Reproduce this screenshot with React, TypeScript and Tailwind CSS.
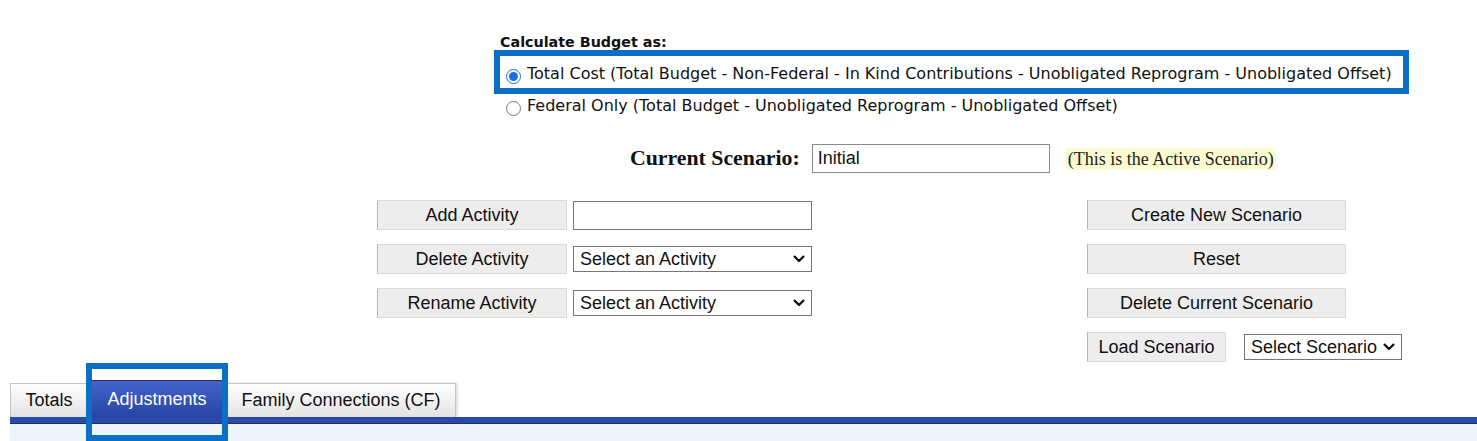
import React from "react";

const Chevron = () => (
  <svg width="12" height="8" viewBox="0 0 12 8" className="shrink-0">
    <path d="M1.6 1.6 L6 6 L10.4 1.6" fill="none" stroke="#111" strokeWidth="2.2" strokeLinecap="round" strokeLinejoin="round" />
  </svg>
);

const Btn = ({ children, className = "" }: { children: React.ReactNode; className?: string }) => (
  <div
    className={
      "flex items-center justify-center h-[30px] bg-[#ededed] border border-[#d9d9d9] border-l-[#b4b4b4] text-[18px] text-[#111] font-['Liberation_Sans',Arial,sans-serif] " +
      className
    }
  >
    {children}
  </div>
);

const Select = ({ label, className = "" }: { label: string; className?: string }) => (
  <div
    className={
      "flex items-center justify-between h-[26px] bg-white border border-[#767676] pl-[6px] pr-[6px] text-[18px] text-[#111] font-['Liberation_Sans',Arial,sans-serif] " +
      className
    }
  >
    <span className="leading-none">{label}</span>
    <Chevron />
  </div>
);

export default function App() {
  return (
    <div className="relative w-full h-[441px] overflow-hidden bg-white text-black">
      {/* Radio section */}
      <div className="pt-[32px] pl-[494px] font-['DejaVu_Sans',Verdana,sans-serif]">
        <div className="h-[18px] leading-[18px] pl-[6px] text-[14.3px] font-bold text-[#111] translate-y-[1px]">Calculate Budget as:</div>
        <div className="w-[915px] h-[44px] border-[6px] border-[#0b6fc6] flex items-center pl-[6px]">
          <input type="radio" name="calc" defaultChecked className="w-[15px] h-[15px] m-0 translate-y-[4px] accent-[#1a6fe0]" />
          <span className="ml-[6px] text-[16px] leading-none text-[#111] whitespace-nowrap translate-y-[2px]">
            Total Cost (Total Budget - Non-Federal - In Kind Contributions - Unobligated Reprogram - Unobligated Offset)
          </span>
        </div>
        <div className="h-[21px] flex items-center pl-[12px]">
          <input type="radio" name="calc" className="w-[15px] h-[15px] m-0 translate-y-[4px]" />
          <span className="ml-[6px] text-[16px] leading-none text-[#111] whitespace-nowrap translate-y-[1px]">
            Federal Only (Total Budget - Unobligated Reprogram - Unobligated Offset)
          </span>
        </div>
      </div>

      {/* Current scenario */}
      <div className="mt-[29px] pl-[630px] flex items-center h-[29px]">
        <span className="font-['Liberation_Serif','Times_New_Roman',serif] font-bold text-[21.8px] leading-none text-[#111] whitespace-nowrap">Current Scenario:</span>
        <div className="ml-[12px] w-[238px] h-[29px] shrink-0 border border-[#8a8a8a] bg-white flex items-center pl-[5px] text-[18px] text-[#111] font-['Liberation_Sans',Arial,sans-serif]">
          Initial
        </div>
        <span className="ml-[16px] px-[2px] bg-[#fbfbd2] font-['Liberation_Serif','Times_New_Roman',serif] text-[18px] leading-[22px] text-[#222] whitespace-nowrap">
          (This is the Active Scenario)
        </span>
      </div>

      {/* Form controls */}
      <div className="mt-[27px] flex">
        <div className="ml-[377px] flex flex-col gap-[14px]">
          <div className="flex items-center gap-[6px]">
            <Btn className="w-[190px]">Add Activity</Btn>
            <div className="w-[239px] h-[29px] border border-[#767676] bg-white" />
          </div>
          <div className="flex items-center gap-[6px]">
            <Btn className="w-[190px]">Delete Activity</Btn>
            <Select label="Select an Activity" className="w-[239px]" />
          </div>
          <div className="flex items-center gap-[6px]">
            <Btn className="w-[190px]">Rename Activity</Btn>
            <Select label="Select an Activity" className="w-[239px]" />
          </div>
        </div>
        <div className="ml-[275px] flex flex-col gap-[14px]">
          <Btn className="w-[259px]">Create New Scenario</Btn>
          <Btn className="w-[259px]">Reset</Btn>
          <Btn className="w-[259px]">Delete Current Scenario</Btn>
          <div className="flex items-center">
            <Btn className="w-[139px]">Load Scenario</Btn>
            <Select label="Select Scenario" className="ml-[18px] w-[158px] h-[25px]" />
          </div>
        </div>
      </div>

      {/* Tabs */}
      <div className="relative mt-[18px] font-['Liberation_Sans',Arial,sans-serif]">
        <div className="flex items-end pl-[10px] gap-[2px] h-[37px]">
          <div className="w-[78px] h-[34px] flex items-center justify-center border border-b-0 border-[#c4c4c4] bg-gradient-to-b from-white to-[#e3e3e3] text-[18px] text-[#111]">
            Totals
          </div>
          <div className="w-[134px] h-[37px] flex items-center justify-center border-t border-[#1d2d66] bg-gradient-to-b from-[#4465cc] to-[#2843a4] text-[18px] text-white">
            Adjustments
          </div>
          <div className="w-[230px] h-[34px] flex items-center justify-center border border-b-0 border-[#c4c4c4] bg-gradient-to-b from-white to-[#e3e3e3] text-[18px] text-[#111] shadow-[2px_0_2px_rgba(0,0,0,0.12)]">
            Family Connections (CF)
          </div>
        </div>
        <div className="ml-[10px] h-[7px] bg-[#2b4aa7] border-b border-[#1b2d6b]" />
        <div className="ml-[10px] h-[17px] bg-[#eef5fc]" />
        <div className="absolute left-[86px] top-[-17px] w-[142px] h-[78px] border-[6px] border-[#0b6fc6] pointer-events-none" />
      </div>
    </div>
  );
}
